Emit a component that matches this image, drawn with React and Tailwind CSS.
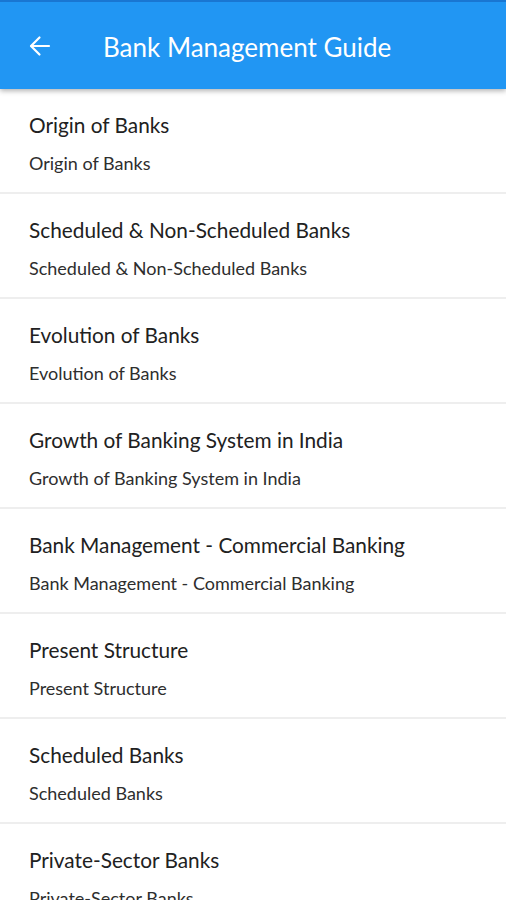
import React from "react";

const items = [
  "Origin of Banks",
  "Scheduled & Non-Scheduled Banks",
  "Evolution of Banks",
  "Growth of Banking System in India",
  "Bank Management - Commercial Banking",
  "Present Structure",
  "Scheduled Banks",
  "Private-Sector Banks",
];

export default function App() {
  return (
    <div
      className="w-[506px] h-[900px] overflow-hidden bg-white relative"
      style={{ fontFamily: "Lato, 'Noto Sans', sans-serif" }}
    >
      <div className="relative z-10 h-[89px] bg-[#2196F3] border-t-2 border-[#1976D2] shadow-[0_2px_5px_rgba(0,0,0,0.3)] flex items-center">
        <div className="w-[103px] flex items-center pl-[28px]">
          <svg width="24" height="24" viewBox="0 0 24 24" fill="none" stroke="white" strokeWidth="2.2" strokeLinecap="round" strokeLinejoin="round">
            <path d="M21 12H3.5" />
            <path d="M11.5 3.5L3 12l8.5 8.5" />
          </svg>
        </div>
        <div className="text-white text-[26px] leading-[30px] mt-[2px]">Bank Management Guide</div>
      </div>
      <div className="flex flex-col">
        {items.map((t) => (
          <div key={t} className="px-[29px] pt-[22px] pb-[17px] border-b-2 border-[#eeeeee]">
            <div className="text-[20.8px] leading-[27px] text-[#212121]">{t}</div>
            <div className="mt-[14px] text-[18px] leading-[23px] text-[#2e2e2e]">{t}</div>
          </div>
        ))}
      </div>
    </div>
  );
}
